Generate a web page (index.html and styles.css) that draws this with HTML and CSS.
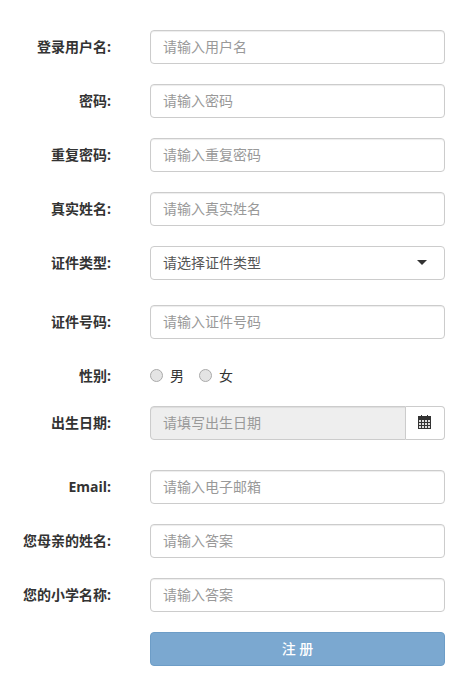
FILE: index.html
```html
<!DOCTYPE html>
<html lang="zh-CN">
<head>
  <meta charset="UTF-8" />
  <title>注册</title>
  <link rel="stylesheet" href="styles.css">
</head>
<body>
  <form class="regForm">
    <div class="row">
      <label class="rowLabel">登录用户名:</label>
      <input class="textInput" type="text" placeholder="请输入用户名">
    </div>
    <div class="row">
      <label class="rowLabel">密码:</label>
      <input class="textInput" type="text" placeholder="请输入密码">
    </div>
    <div class="row">
      <label class="rowLabel">重复密码:</label>
      <input class="textInput" type="text" placeholder="请输入重复密码">
    </div>
    <div class="row">
      <label class="rowLabel">真实姓名:</label>
      <input class="textInput" type="text" placeholder="请输入真实姓名">
    </div>
    <div class="row rowSelect">
      <label class="rowLabel">证件类型:</label>
      <div class="selectBox">
        <span>请选择证件类型</span>
        <span class="caret"></span>
      </div>
    </div>
    <div class="row">
      <label class="rowLabel">证件号码:</label>
      <input class="textInput" type="text" placeholder="请输入证件号码">
    </div>
    <div class="row rowRadio">
      <label class="rowLabel">性别:</label>
      <div class="radios">
        <span class="radio"></span><span class="radioText">男</span>
        <span class="radio"></span><span class="radioText">女</span>
      </div>
    </div>
    <div class="row rowDate">
      <label class="rowLabel">出生日期:</label>
      <div class="dateGroup">
        <input class="textInput dateInput" type="text" placeholder="请填写出生日期" disabled>
        <span class="dateAddon">
          <svg xmlns="http://www.w3.org/2000/svg" width="13" height="14" viewBox="0 0 13 14">
            <rect x="3" y="0" width="1" height="2" fill="#333"/>
            <rect x="9" y="0" width="1" height="2" fill="#333"/>
            <rect x="0" y="1" width="13" height="13" fill="#333"/>
            <g fill="#ddd">
              <rect x="1" y="5" width="2" height="2"/><rect x="4" y="5" width="2" height="2"/><rect x="7" y="5" width="2" height="2"/><rect x="10" y="5" width="2" height="2"/>
              <rect x="1" y="8" width="2" height="2"/><rect x="4" y="8" width="2" height="2"/><rect x="7" y="8" width="2" height="2"/><rect x="10" y="8" width="2" height="2"/>
              <rect x="1" y="11" width="2" height="2"/><rect x="4" y="11" width="2" height="2"/><rect x="7" y="11" width="2" height="2"/><rect x="10" y="11" width="2" height="2"/>
            </g>
          </svg>
        </span>
      </div>
    </div>
    <div class="row">
      <label class="rowLabel">Email:</label>
      <input class="textInput" type="text" placeholder="请输入电子邮箱">
    </div>
    <div class="row">
      <label class="rowLabel">您母亲的姓名:</label>
      <input class="textInput" type="text" placeholder="请输入答案">
    </div>
    <div class="row">
      <label class="rowLabel">您的小学名称:</label>
      <input class="textInput" type="text" placeholder="请输入答案">
    </div>
    <div class="row">
      <span class="rowLabel"></span>
      <button class="submitBtn" type="button">注 册</button>
    </div>
  </form>
</body>
</html>
```

FILE: styles.css
```css
* {
  box-sizing: border-box;
}

body {
  margin: 0;
  background-color: #fff;
  font-family: "Open Sans", "Noto Sans CJK SC", sans-serif;
  font-size: 14px;
  color: #333;
}

.regForm {
  padding-top: 30px;
  width: 445px;
}

.row {
  display: flex;
  align-items: center;
  gap: 38px;
  height: 34px;
  margin-bottom: 20px;
}

.rowSelect {
  margin-bottom: 25px;
}

.rowRadio {
  height: 27px;
  padding-top: 6px;
}

.rowDate {
  margin-bottom: 30px;
}

.rowLabel {
  flex: 0 0 112px;
  padding: 0 1px 2px 0;
  text-align: right;
  font-weight: 700;
  white-space: nowrap;
}

.textInput {
  flex: 1;
  min-width: 0;
  height: 34px;
  padding: 5px 12px 7px;
  border: 1px solid #ccc;
  border-radius: 4px;
  font: inherit;
  color: #555;
  box-shadow: inset 0 1px 1px rgba(0, 0, 0, 0.075);
}

.textInput::placeholder {
  color: #999;
  opacity: 1;
}

.selectBox {
  flex: 1;
  height: 34px;
  display: flex;
  align-items: center;
  justify-content: space-between;
  padding: 0 17px 2px 12px;
  border: 1px solid #ccc;
  border-radius: 4px;
  color: #555;
}

.caret {
  width: 0;
  height: 0;
  border-top: 5px solid #333;
  border-left: 5px solid transparent;
  border-right: 5px solid transparent;
}

.radios {
  display: flex;
  align-items: center;
}

.radio {
  width: 13px;
  height: 13px;
  border: 1px solid #aaa;
  border-radius: 50%;
  background-color: #e4e4e4;
}

.radioText {
  margin: 0 15px 0 7px;
  padding-bottom: 2px;
}

.dateGroup {
  flex: 1;
  display: flex;
  height: 34px;
}

.dateInput {
  border-radius: 4px 0 0 4px;
  background-color: #eee;
  cursor: not-allowed;
}

.dateAddon {
  flex: 0 0 39px;
  display: flex;
  align-items: center;
  justify-content: center;
  padding: 0 2px 2px 0;
  border: 1px solid #ccc;
  border-left: 0;
  border-radius: 0 4px 4px 0;
}

.submitBtn {
  flex: 1;
  height: 34px;
  padding-bottom: 3px;
  border: 1px solid #6d9dc7;
  border-radius: 4px;
  background-color: #7ba8d0;
  color: #fff;
  font: inherit;
  font-weight: 500;
}
```
